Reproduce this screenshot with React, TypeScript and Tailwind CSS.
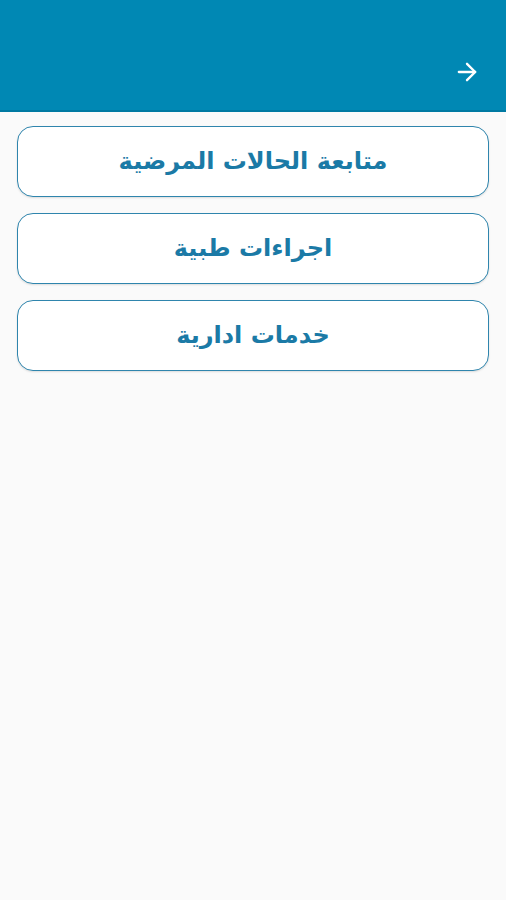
import { ArrowRight } from "lucide-react";

const items = ["متابعة الحالات المرضية", "اجراءات طبية", "خدمات ادارية"];

export default function App() {
  return (
    <div className="min-h-[900px] w-full bg-[#fafafa] font-['DejaVu_Sans',sans-serif]">
      <header className="flex h-[112px] items-end justify-end border-b-2 border-[#0079a2] bg-[#0088b4] px-[25px] pb-[24px]">
        <ArrowRight className="h-[28px] w-[28px] text-white" strokeWidth={2} />
      </header>

      <div dir="rtl" className="flex flex-col gap-[16px] px-[17px] pt-[14px]">
        {items.map((t) => (
          <button
            key={t}
            type="button"
            className="flex h-[71px] items-center justify-center rounded-[16px] border-[1.5px] border-[#2f85ad] bg-white pb-[2px] text-[24px] font-bold text-[#1b7aa6] shadow-[0_1px_2px_rgba(0,0,0,0.12)]"
          >
            {t}
          </button>
        ))}
      </div>
    </div>
  );
}
